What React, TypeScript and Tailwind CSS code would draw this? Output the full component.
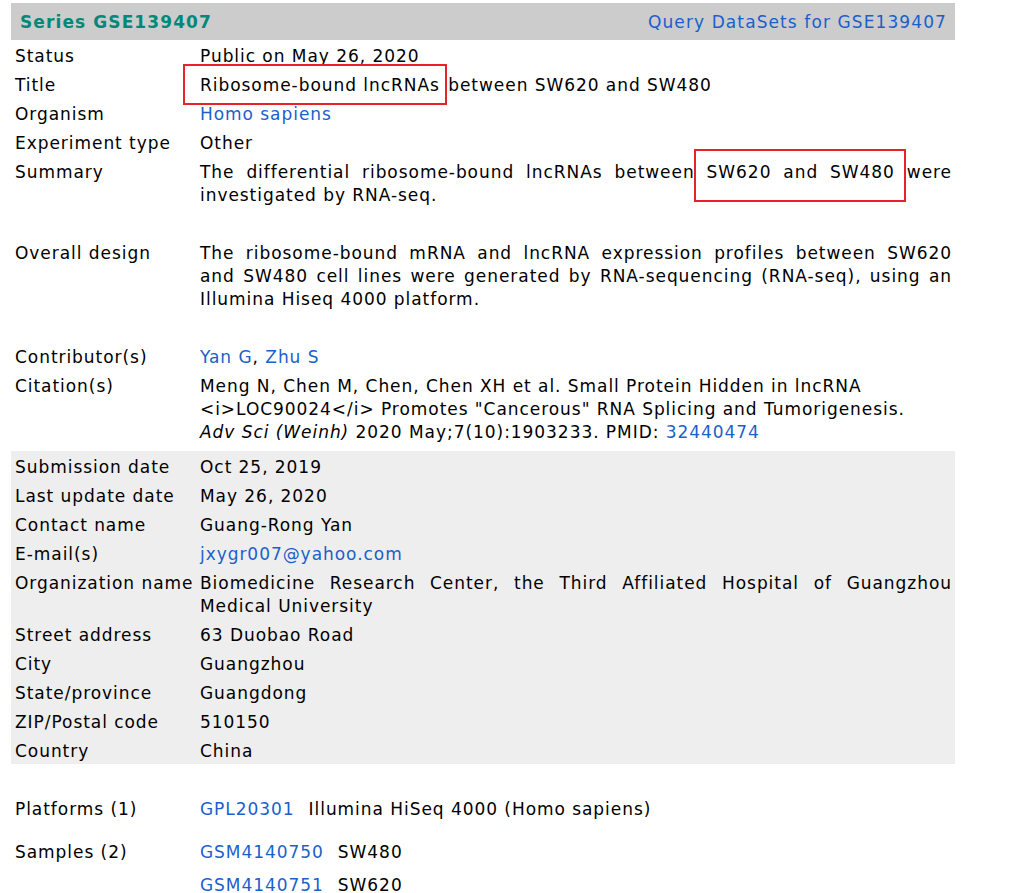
import React from 'react';

const link = 'text-[#1a5fcc]';

const Row = ({ label, children, extra = false }: { label: string; children: React.ReactNode; extra?: boolean }) => (
  <div className={`flex ${extra ? 'pb-[29px]' : ''}`}>
    <div className="w-[185px] shrink-0 pl-[4px] pt-[5px] pb-[1px] whitespace-nowrap">{label}</div>
    <div className="flex-1 pl-[4px] pr-[3px] pt-[5px] pb-[1px]">{children}</div>
  </div>
);

// red annotation box drawn over a piece of text
const Marked = ({ children, box }: { children: React.ReactNode; box: string }) => (
  <span className="relative">
    {children}
    <span className={`absolute border-2 border-[#e8212b] ${box}`} />
  </span>
);

export default function App() {
  return (
    <div className="min-h-screen bg-white text-black text-[17px] tracking-[0.95px] leading-[23px] font-['DejaVu_Sans',Verdana,sans-serif]">
      <div className="w-[944px] ml-[11px] pt-[3px]">
        {/* header bar */}
        <div className="flex items-center justify-between h-[37px] bg-[#cccccc] pl-[9px] pr-[8px] pt-[2px] tracking-[1.1px]">
          <span className="font-bold text-[17px] text-[#00897b]">Series GSE139407</span>
          <span className={`text-[17px] ${link}`}>Query DataSets for GSE139407</span>
        </div>

        <Row label="Status">Public on May 26, 2020</Row>
        <Row label="Title">
          <Marked box="-left-[17px] -right-[7px] -top-[11px] -bottom-[10px]">Ribosome-bound lncRNAs</Marked>{' '}
          <span className="ml-[2px]">between SW620 and SW480</span>
        </Row>
        <Row label="Organism"><span className={link}>Homo sapiens</span></Row>
        <Row label="Experiment type">Other</Row>
        <Row label="Summary" extra>
          <p className="text-justify">
            The differential ribosome-bound lncRNAs between{' '}
            <Marked box="-left-[13px] -right-[11px] -top-[13px] -bottom-[20px]">SW620 and SW480</Marked> were
            investigated by RNA-seq.
          </p>
        </Row>
        <Row label="Overall design" extra>
          <p className="text-justify">
            The ribosome-bound mRNA and lncRNA expression profiles between SW620 and SW480 cell lines were generated by
            RNA-sequencing (RNA-seq), using an Illumina Hiseq 4000 platform.
          </p>
        </Row>
        <Row label="Contributor(s)">
          <span className={link}>Yan G</span>, <span className={link}>Zhu S</span>
        </Row>
        <Row label="Citation(s)">
          Meng N, Chen M, Chen, Chen XH et al. Small Protein Hidden in lncRNA
          <br />
          &lt;i&gt;LOC90024&lt;/i&gt; Promotes "Cancerous" RNA Splicing and Tumorigenesis.
          <br />
          <i>Adv Sci (Weinh)</i> 2020 May;7(10):1903233. PMID: <span className={link}>32440474</span>
        </Row>

        {/* contact block */}
        <div className="mt-[6px] bg-[#eeeeee]">
          <Row label="Submission date">Oct 25, 2019</Row>
          <Row label="Last update date">May 26, 2020</Row>
          <Row label="Contact name">Guang-Rong Yan</Row>
          <Row label="E-mail(s)"><span className={link}>jxygr007@yahoo.com</span></Row>
          <Row label="Organization name">
            <p className="text-justify">
              Biomedicine Research Center, the Third Affiliated Hospital of Guangzhou Medical University
            </p>
          </Row>
          <Row label="Street address">63 Duobao Road</Row>
          <Row label="City">Guangzhou</Row>
          <Row label="State/province">Guangdong</Row>
          <Row label="ZIP/Postal code">510150</Row>
          <Row label="Country">China</Row>
        </div>

        {/* related records */}
        <div className="mt-[31px] flex items-center h-[29px]">
          <div className="w-[185px] pl-[4px]">Platforms (1)</div>
          <div className="pl-[4px] flex gap-[14px]">
            <span className={link}>GPL20301</span>
            <span>Illumina HiSeq 4000 (Homo sapiens)</span>
          </div>
        </div>
        <div className="mt-[14px] flex">
          <div className="w-[185px] pl-[4px] h-[29px] flex items-center">Samples (2)</div>
          <div className="pl-[4px] flex flex-col gap-[4px]">
            <div className="flex items-center h-[29px] gap-[14px]">
              <span className={link}>GSM4140750</span>
              <span>SW480</span>
            </div>
            <div className="flex items-center h-[29px] gap-[14px]">
              <span className={link}>GSM4140751</span>
              <span>SW620</span>
            </div>
          </div>
        </div>
      </div>
    </div>
  );
}
